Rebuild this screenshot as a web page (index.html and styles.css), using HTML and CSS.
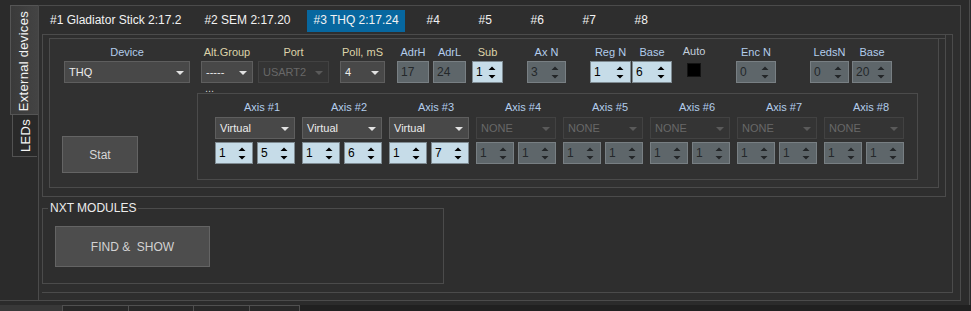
FILE: index.html
```html
<!DOCTYPE html>
<html>
<head>
<meta charset="utf-8">
<link rel="stylesheet" href="styles.css">
</head>
<body>
<div class="window">
  <div class="main">
    <div class="vtabs">
      <div class="vtab vtab-active"><span>External devices</span></div>
      <div class="vtab vtab-leds"><span>LEDs</span></div>
    </div>
    <div class="vpane">
      <div class="tabbar">
        <div class="tab">#1 Gladiator Stick 2:17.2</div>
        <div class="tab">#2 SEM 2:17.20</div>
        <div class="tab tab-sel">#3 THQ 2:17.24</div>
        <div class="tab tab-num tab-first-num">#4</div>
        <div class="tab tab-num">#5</div>
        <div class="tab tab-num">#6</div>
        <div class="tab tab-num">#7</div>
        <div class="tab tab-num">#8</div>
      </div>
      <div class="hpane">
        <div class="dev">
          <div class="dev-outer">
            <div class="dev-inner">
              <div class="toprow">
                <div class="field f-device">
                  <div class="lbl lbl-blue">Device</div>
                  <div class="combo"><span>THQ</span><i class="arrow"></i></div>
                </div>
                <div class="field f-alt">
                  <div class="lbl lbl-tan">Alt.Group</div>
                  <div class="combo"><span>-----</span><i class="arrow"></i></div>
                </div>
                <div class="field f-port">
                  <div class="lbl lbl-tan">Port</div>
                  <div class="combo combo-dis"><span>USART2</span><i class="arrow"></i></div>
                </div>
                <div class="field f-poll">
                  <div class="lbl lbl-tan">Poll, mS</div>
                  <div class="combo"><span>4</span><i class="arrow"></i></div>
                </div>
                <div class="field f-adrh">
                  <div class="lbl lbl-blue">AdrH</div>
                  <div class="spin spin-dis"><span>17</span></div>
                </div>
                <div class="field f-adrl">
                  <div class="lbl lbl-blue">AdrL</div>
                  <div class="spin spin-dis"><span>24</span></div>
                </div>
                <div class="field f-sub">
                  <div class="lbl lbl-tan">Sub</div>
                  <div class="spin"><span>1</span><svg class="updown" viewBox="0 0 8 13" width="8" height="13"><path d="M0.5 4 L4 0.5 L7.5 4 Z M0.5 9 L7.5 9 L4 12.5 Z"/></svg></div>
                </div>
                <div class="field f-axn">
                  <div class="lbl lbl-blue">Ax N</div>
                  <div class="spin spin-dis"><span>3</span><svg class="updown" viewBox="0 0 8 13" width="8" height="13"><path d="M0.5 4 L4 0.5 L7.5 4 Z M0.5 9 L7.5 9 L4 12.5 Z"/></svg></div>
                </div>
                <div class="field f-regn">
                  <div class="lbl lbl-blue">Reg N</div>
                  <div class="spin"><span>1</span><svg class="updown" viewBox="0 0 8 13" width="8" height="13"><path d="M0.5 4 L4 0.5 L7.5 4 Z M0.5 9 L7.5 9 L4 12.5 Z"/></svg></div>
                </div>
                <div class="field f-base">
                  <div class="lbl lbl-blue">Base</div>
                  <div class="spin"><span>6</span><svg class="updown" viewBox="0 0 8 13" width="8" height="13"><path d="M0.5 4 L4 0.5 L7.5 4 Z M0.5 9 L7.5 9 L4 12.5 Z"/></svg></div>
                </div>
                <div class="field f-auto">
                  <div class="lbl lbl-grey lbl-auto">Auto</div>
                  <div class="check"></div>
                </div>
                <div class="field f-encn">
                  <div class="lbl lbl-blue">Enc N</div>
                  <div class="spin spin-dis"><span>0</span><svg class="updown" viewBox="0 0 8 13" width="8" height="13"><path d="M0.5 4 L4 0.5 L7.5 4 Z M0.5 9 L7.5 9 L4 12.5 Z"/></svg></div>
                </div>
                <div class="field f-ledsn">
                  <div class="lbl lbl-blue">LedsN</div>
                  <div class="spin spin-dis"><span>0</span><svg class="updown" viewBox="0 0 8 13" width="8" height="13"><path d="M0.5 4 L4 0.5 L7.5 4 Z M0.5 9 L7.5 9 L4 12.5 Z"/></svg></div>
                </div>
                <div class="field f-base2">
                  <div class="lbl lbl-blue">Base</div>
                  <div class="spin spin-dis"><span>20</span><svg class="updown" viewBox="0 0 8 13" width="8" height="13"><path d="M0.5 4 L4 0.5 L7.5 4 Z M0.5 9 L7.5 9 L4 12.5 Z"/></svg></div>
                </div>
              </div>
              <div class="midrow">
                <div class="btn btn-stat">Stat</div>
                <div class="axes">
                  <span class="axes-title">...</span>
                  <div class="axcol">
                    <div class="axlbl">Axis #1</div>
                    <div class="combo"><span>Virtual</span><i class="arrow"></i></div>
                    <div class="spins">
                      <div class="spin"><span>1</span><svg class="updown" viewBox="0 0 8 13" width="8" height="13"><path d="M0.5 4 L4 0.5 L7.5 4 Z M0.5 9 L7.5 9 L4 12.5 Z"/></svg></div>
                      <div class="spin"><span>5</span><svg class="updown" viewBox="0 0 8 13" width="8" height="13"><path d="M0.5 4 L4 0.5 L7.5 4 Z M0.5 9 L7.5 9 L4 12.5 Z"/></svg></div>
                    </div>
                  </div>
                  <div class="axcol">
                    <div class="axlbl">Axis #2</div>
                    <div class="combo"><span>Virtual</span><i class="arrow"></i></div>
                    <div class="spins">
                      <div class="spin"><span>1</span><svg class="updown" viewBox="0 0 8 13" width="8" height="13"><path d="M0.5 4 L4 0.5 L7.5 4 Z M0.5 9 L7.5 9 L4 12.5 Z"/></svg></div>
                      <div class="spin"><span>6</span><svg class="updown" viewBox="0 0 8 13" width="8" height="13"><path d="M0.5 4 L4 0.5 L7.5 4 Z M0.5 9 L7.5 9 L4 12.5 Z"/></svg></div>
                    </div>
                  </div>
                  <div class="axcol">
                    <div class="axlbl">Axis #3</div>
                    <div class="combo"><span>Virtual</span><i class="arrow"></i></div>
                    <div class="spins">
                      <div class="spin"><span>1</span><svg class="updown" viewBox="0 0 8 13" width="8" height="13"><path d="M0.5 4 L4 0.5 L7.5 4 Z M0.5 9 L7.5 9 L4 12.5 Z"/></svg></div>
                      <div class="spin"><span>7</span><svg class="updown" viewBox="0 0 8 13" width="8" height="13"><path d="M0.5 4 L4 0.5 L7.5 4 Z M0.5 9 L7.5 9 L4 12.5 Z"/></svg></div>
                    </div>
                  </div>
                  <div class="axcol">
                    <div class="axlbl">Axis #4</div>
                    <div class="combo combo-dis"><span>NONE</span><i class="arrow"></i></div>
                    <div class="spins">
                      <div class="spin spin-dis"><span>1</span><svg class="updown" viewBox="0 0 8 13" width="8" height="13"><path d="M0.5 4 L4 0.5 L7.5 4 Z M0.5 9 L7.5 9 L4 12.5 Z"/></svg></div>
                      <div class="spin spin-dis"><span>1</span><svg class="updown" viewBox="0 0 8 13" width="8" height="13"><path d="M0.5 4 L4 0.5 L7.5 4 Z M0.5 9 L7.5 9 L4 12.5 Z"/></svg></div>
                    </div>
                  </div>
                  <div class="axcol">
                    <div class="axlbl">Axis #5</div>
                    <div class="combo combo-dis"><span>NONE</span><i class="arrow"></i></div>
                    <div class="spins">
                      <div class="spin spin-dis"><span>1</span><svg class="updown" viewBox="0 0 8 13" width="8" height="13"><path d="M0.5 4 L4 0.5 L7.5 4 Z M0.5 9 L7.5 9 L4 12.5 Z"/></svg></div>
                      <div class="spin spin-dis"><span>1</span><svg class="updown" viewBox="0 0 8 13" width="8" height="13"><path d="M0.5 4 L4 0.5 L7.5 4 Z M0.5 9 L7.5 9 L4 12.5 Z"/></svg></div>
                    </div>
                  </div>
                  <div class="axcol">
                    <div class="axlbl">Axis #6</div>
                    <div class="combo combo-dis"><span>NONE</span><i class="arrow"></i></div>
                    <div class="spins">
                      <div class="spin spin-dis"><span>1</span><svg class="updown" viewBox="0 0 8 13" width="8" height="13"><path d="M0.5 4 L4 0.5 L7.5 4 Z M0.5 9 L7.5 9 L4 12.5 Z"/></svg></div>
                      <div class="spin spin-dis"><span>1</span><svg class="updown" viewBox="0 0 8 13" width="8" height="13"><path d="M0.5 4 L4 0.5 L7.5 4 Z M0.5 9 L7.5 9 L4 12.5 Z"/></svg></div>
                    </div>
                  </div>
                  <div class="axcol">
                    <div class="axlbl">Axis #7</div>
                    <div class="combo combo-dis"><span>NONE</span><i class="arrow"></i></div>
                    <div class="spins">
                      <div class="spin spin-dis"><span>1</span><svg class="updown" viewBox="0 0 8 13" width="8" height="13"><path d="M0.5 4 L4 0.5 L7.5 4 Z M0.5 9 L7.5 9 L4 12.5 Z"/></svg></div>
                      <div class="spin spin-dis"><span>1</span><svg class="updown" viewBox="0 0 8 13" width="8" height="13"><path d="M0.5 4 L4 0.5 L7.5 4 Z M0.5 9 L7.5 9 L4 12.5 Z"/></svg></div>
                    </div>
                  </div>
                  <div class="axcol">
                    <div class="axlbl">Axis #8</div>
                    <div class="combo combo-dis"><span>NONE</span><i class="arrow"></i></div>
                    <div class="spins">
                      <div class="spin spin-dis"><span>1</span><svg class="updown" viewBox="0 0 8 13" width="8" height="13"><path d="M0.5 4 L4 0.5 L7.5 4 Z M0.5 9 L7.5 9 L4 12.5 Z"/></svg></div>
                      <div class="spin spin-dis"><span>1</span><svg class="updown" viewBox="0 0 8 13" width="8" height="13"><path d="M0.5 4 L4 0.5 L7.5 4 Z M0.5 9 L7.5 9 L4 12.5 Z"/></svg></div>
                    </div>
                  </div>
                </div>
              </div>
            </div>
          </div>
        </div>
        <div class="nxt">
          <span class="nxt-title">NXT MODULES</span>
          <div class="btn btn-find">FIND &amp;&nbsp; SHOW</div>
        </div>
      </div>
    </div>
  </div>
  <div class="bottombar">
    <div class="bt bt-first"></div>
    <div class="bt bt-2"></div>
    <div class="bt bt-3"></div>
    <div class="bt bt-4"></div>
    <div class="bt bt-5"></div>
  </div>
</div>
</body>
</html>
```

FILE: styles.css
```css
* { box-sizing: border-box; margin: 0; padding: 0; }

html, body {
  width: 971px;
  height: 311px;
  overflow: hidden;
}

body {
  background: #2b2b2b;
  font-family: "Liberation Sans", Arial, sans-serif;
  color: #e6e6e6;
}

.window {
  width: 971px;
  height: 311px;
  display: flex;
  flex-direction: column;
}

.main {
  height: 305px;
  width: 970px;
  display: flex;
  align-items: flex-start;
  border-right: 1px solid #4a4a4a;
  flex: none;
}

/* vertical tabs */
.vtabs {
  flex: none;
  width: 38px;
  height: 301px;
  border-bottom: 1px solid #4a4a4a;
  padding-top: 5px;
  display: flex;
  flex-direction: column;
  align-items: flex-start;
}

.vtab {
  display: flex;
  align-items: center;
  justify-content: center;
  font-size: 13px;
  letter-spacing: 0.3px;
  color: #f4f4f4;
}

.vtab span {
  writing-mode: vertical-rl;
  transform: rotate(180deg);
  line-height: 15px;
  white-space: nowrap;
}

.vtab-active {
  margin-left: 10px;
  width: 28px;
  height: 110px;
  background: linear-gradient(to right, #3a3a3a, #444444);
  border: 1px solid #555555;
  border-right: none;
  padding-right: 3px;
  padding-top: 3px;
}

.vtab-leds {
  margin-left: 12px;
  width: 25px;
  height: 42px;
  border: 1px solid #525252;
  border-top: none;
  border-right: none;
  background: #292929;
}

/* main pane */
.vpane {
  flex: none;
  margin-top: 5px;
  margin-right: 8px;
  width: 923px;
  height: 296px;
  border: 1px solid #4b4b4b;
  background: #2e2e2e;
}

.tabbar {
  height: 28px;
  padding: 4px 0 0 5px;
  display: flex;
  gap: 11px;
  align-items: flex-start;
}

.tab {
  height: 22px;
  line-height: 20px;
  padding: 0 6px;
  font-size: 12px;
  color: #f2f2f2;
  white-space: nowrap;
}

.tab-sel {
  background: #07679f;
}

.tab-num {
  width: 41px;
  padding: 0;
  text-align: center;
}

.tab-first-num {
  margin-left: -3px;
}

.hpane {
  margin-left: 3px;
  width: 911px;
  height: 259px;
  border: 1px solid #4b4b4b;
  border-left: none;
}

.dev {
  width: 904px;
  height: 162px;
  border: 1px solid #4b4b4b;
  border-top: none;
  padding: 3px 0 0 6px;
}

.dev-outer {
  width: 896px;
  height: 150px;
  border-top: 1px solid #4b4b4b;
  border-left: 1px solid #4b4b4b;
}

.dev-inner {
  width: 889px;
  height: 149px;
  border-right: 1px solid #4b4b4b;
  border-bottom: 1px solid #4b4b4b;
  background: #313131;
}

/* top row of fields */
.toprow {
  display: flex;
  align-items: flex-start;
  padding: 6px 0 0 14px;
  height: 44px;
}

.field {
  display: flex;
  flex-direction: column;
  align-items: center;
}

.lbl {
  height: 14px;
  line-height: 14px;
  font-size: 11px;
  white-space: nowrap;
  margin-bottom: 2px;
}

.lbl-blue { color: #b3cdec; }
.lbl-tan { color: #ddd3a9; }
.lbl-grey { color: #c3cedb; }
.lbl-auto { margin-top: -1px; margin-bottom: 3px; }

.f-device { width: 126px; }
.f-alt { width: 52px; margin-left: 11px; }
.f-port { width: 71px; margin-left: 5px; }
.f-poll { width: 45px; margin-left: 11px; }
.f-adrh { width: 32px; margin-left: 12px; }
.f-adrl { width: 33px; margin-left: 4px; }
.f-sub { width: 31px; margin-left: 6px; }
.f-axn { width: 39px; margin-left: 24px; }
.f-regn { width: 41px; margin-left: 24px; }
.f-base { width: 40px; margin-left: 1px; }
.f-auto { width: 28px; margin-left: 8px; }
.f-encn { width: 40px; margin-left: 28px; }
.f-ledsn { width: 39px; margin-left: 34px; }
.f-base2 { width: 40px; margin-left: 3px; }

.combo {
  width: 100%;
  height: 22px;
  border: 1px solid #5e5e5e;
  background: #484848;
  display: flex;
  align-items: center;
  justify-content: space-between;
  padding: 0 5px 0 4px;
  font-size: 11px;
  color: #ececec;
  white-space: nowrap;
}

.arrow {
  width: 0;
  height: 0;
  border-left: 4px solid transparent;
  border-right: 4px solid transparent;
  border-top: 4px solid #e2e2e2;
  margin-top: 1px;
}

.combo-dis {
  background: #343434;
  border-color: #424242;
  color: #686868;
}

.combo-dis .arrow {
  border-top-color: #5a5a5a;
}

.spin {
  width: 100%;
  height: 22px;
  border: 1px solid #7f8b92;
  background: #c6dce8;
  display: flex;
  align-items: center;
  justify-content: space-between;
  padding: 0 6px 0 3px;
  font-size: 12px;
  color: #000000;
}

.updown {
  fill: #000000;
  flex: none;
}

.spin-dis {
  background: #5e666a;
  border-color: #787f83;
  color: #24282a;
}

.spin-dis .updown {
  fill: #232628;
}

.check {
  width: 14px;
  height: 14px;
  background: #000000;
  border: 1px solid #141414;
  margin-top: 2px;
}

/* middle row */
.midrow {
  display: flex;
  align-items: flex-start;
  margin-top: 10px;
  padding-left: 12px;
}

.btn {
  border: 1px solid #646464;
  background: #4b4b4b;
  color: #d6d6d6;
  font-size: 12px;
  display: flex;
  align-items: center;
  justify-content: center;
  white-space: nowrap;
}

.btn-stat {
  width: 76px;
  height: 37px;
  margin-top: 43px;
  flex: none;
}

.axes {
  position: relative;
  margin-left: 59px;
  width: 721px;
  height: 87px;
  border: 1px solid #4b4b4b;
  padding: 6px 0 0 17px;
  display: flex;
  gap: 7px;
  flex: none;
}

.axes-title {
  position: absolute;
  left: 6px;
  top: -13px;
  padding: 0 1px;
  font-size: 11px;
  line-height: 14px;
  color: #cfcfcf;
}

.axcol {
  width: 80px;
  display: flex;
  flex-direction: column;
}

.axlbl {
  height: 14px;
  line-height: 14px;
  font-size: 11px;
  color: #b3cdec;
  text-align: center;
  padding-left: 14px;
  white-space: nowrap;
  margin-bottom: 3px;
}

.spins {
  display: flex;
  gap: 4px;
  margin-top: 3px;
}

.spins .spin {
  width: 38px;
}

/* NXT group */
.nxt {
  position: relative;
  margin-top: 11px;
  width: 402px;
  height: 76px;
  border: 1px solid #4b4b4b;
  padding: 17px 0 0 12px;
}

.nxt-title {
  position: absolute;
  left: 5px;
  top: -8px;
  padding: 0 2px;
  background: #2e2e2e;
  font-size: 12px;
  line-height: 14px;
  color: #ececec;
  white-space: nowrap;
}

.btn-find {
  width: 155px;
  height: 41px;
  background: #4d4d4d;
  color: #d2d2d2;
}

/* bottom strip */
.bottombar {
  height: 6px;
  display: flex;
  background: #202020;
}

.bt {
  height: 6px;
  border-top: 1px solid #505050;
  border-left: 1px solid #505050;
  background: #282828;
}

.bt-first { width: 62px; background: #383838; border: none; }
.bt-2 { width: 66px; }
.bt-3 { width: 65px; }
.bt-4 { width: 56px; }
.bt-5 { width: 51px; border-right: 1px solid #505050; }
```
